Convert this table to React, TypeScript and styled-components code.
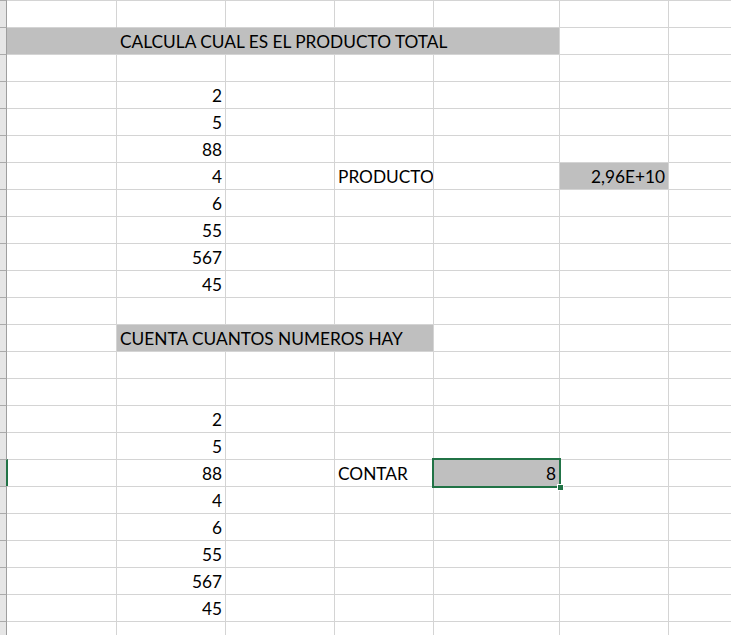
import React from "react";
import styled, { createGlobalStyle, css } from "styled-components";

const GlobalStyle = createGlobalStyle`
  html, body { margin: 0; padding: 0; background: #ffffff; }
  body { width: 731px; height: 635px; overflow: hidden; }
`;

const GRID = "#d4d4d4";
const FILL = "#bfbfbf";
const GREEN = "#217346";

const Sheet = styled.div`
  display: grid;
  grid-template-columns: 7px 109px 109px 109px 99px 126px 109px 1fr;
  grid-auto-rows: 27px;
  width: 731px;
  height: 635px;
  overflow: hidden;
  font-family: Lato, "Liberation Sans", sans-serif;
  font-size: 17.3px;
  color: #000;
`;

const RowHead = styled.div<{ $active?: boolean }>`
  box-sizing: border-box;
  border-top: 1px solid #ababab;
  border-right: 1px solid ${(p) => (p.$active ? GREEN : "#9e9e9e")};
  background: ${(p) => (p.$active ? "#d2d2d2" : "#e6e6e6")};
  ${(p) =>
    p.$active &&
    css`
      border-right-width: 2px;
      margin-right: -1px;
      position: relative;
      z-index: 2;
    `}
`;

const Cell = styled.div<{
  $span: number;
  $first?: boolean;
  $fill?: boolean;
  $joinLeft?: boolean;
  $align?: "left" | "right";
  $selected?: boolean;
}>`
  box-sizing: border-box;
  grid-column: span ${(p) => p.$span};
  border-top: 1px solid ${GRID};
  border-left: ${(p) => (p.$first ? "none" : `1px solid ${p.$joinLeft ? FILL : GRID}`)};
  background: ${(p) => (p.$fill ? FILL : "transparent")};
  display: flex;
  align-items: flex-end;
  justify-content: ${(p) => (p.$align === "right" ? "flex-end" : "flex-start")};
  padding: 0 3px 2px 3px;
  white-space: nowrap;
  line-height: 20px;
  position: relative;
  ${(p) =>
    p.$selected &&
    css`
      z-index: 3;
      overflow: visible;
    `}
`;

const SelectionFrame = styled.span`
  position: absolute;
  top: -2px;
  left: -2px;
  right: -2px;
  bottom: -2px;
  border: 2px solid ${GREEN};
  pointer-events: none;
`;

const FillHandle = styled.span`
  position: absolute;
  right: -5px;
  bottom: -5px;
  width: 5px;
  height: 5px;
  background: ${GREEN};
  border: 1px solid #ffffff;
`;

type CellDef = {
  col: number;
  span?: number;
  text?: string;
  align?: "left" | "right";
  fill?: boolean;
  selected?: boolean;
};

const numbers = ["2", "5", "88", "4", "6", "55", "567", "45"];

const rowDefs: Record<number, CellDef[]> = {
  2: [
    { col: 0, fill: true },
    { col: 1, span: 4, fill: true, text: "CALCULA CUAL ES EL PRODUCTO TOTAL" },
  ],
  13: [{ col: 1, span: 3, fill: true, text: "CUENTA CUANTOS NUMEROS HAY" }],
};

numbers.forEach((n, i) => {
  rowDefs[4 + i] = [{ col: 1, text: n, align: "right" }];
  rowDefs[16 + i] = [{ col: 1, text: n, align: "right" }];
});
rowDefs[7].push(
  { col: 3, text: "PRODUCTO" },
  { col: 5, text: "2,96E+10", align: "right", fill: true }
);
rowDefs[18].push(
  { col: 3, text: "CONTAR" },
  { col: 4, text: "8", align: "right", fill: true, selected: true }
);

const COLS = 7;
const ROWS = 24;

function buildRow(r: number) {
  const defs = rowDefs[r] || [];
  const out: CellDef[] = [];
  let c = 0;
  while (c < COLS) {
    const d = defs.find((x) => x.col === c);
    if (d) {
      out.push(d);
      c += d.span || 1;
    } else {
      out.push({ col: c });
      c += 1;
    }
  }
  return out;
}

export default function App() {
  const rows = Array.from({ length: ROWS }, (_, i) => i + 1);
  return (
    <>
      <GlobalStyle />
      <Sheet>
        {rows.map((r) => {
          const cells = buildRow(r);
          return (
            <React.Fragment key={r}>
              <RowHead $active={r === 18} />
              {cells.map((c, i) => (
                <Cell
                  key={c.col}
                  $span={c.span || 1}
                  $first={c.col === 0}
                  $fill={c.fill}
                  $joinLeft={!!c.fill && i > 0 && !!cells[i - 1].fill}
                  $align={c.align}
                  $selected={c.selected}
                >
                  {c.text}
                  {c.selected && (
                    <SelectionFrame>
                      <FillHandle />
                    </SelectionFrame>
                  )}
                </Cell>
              ))}
            </React.Fragment>
          );
        })}
      </Sheet>
    </>
  );
}
